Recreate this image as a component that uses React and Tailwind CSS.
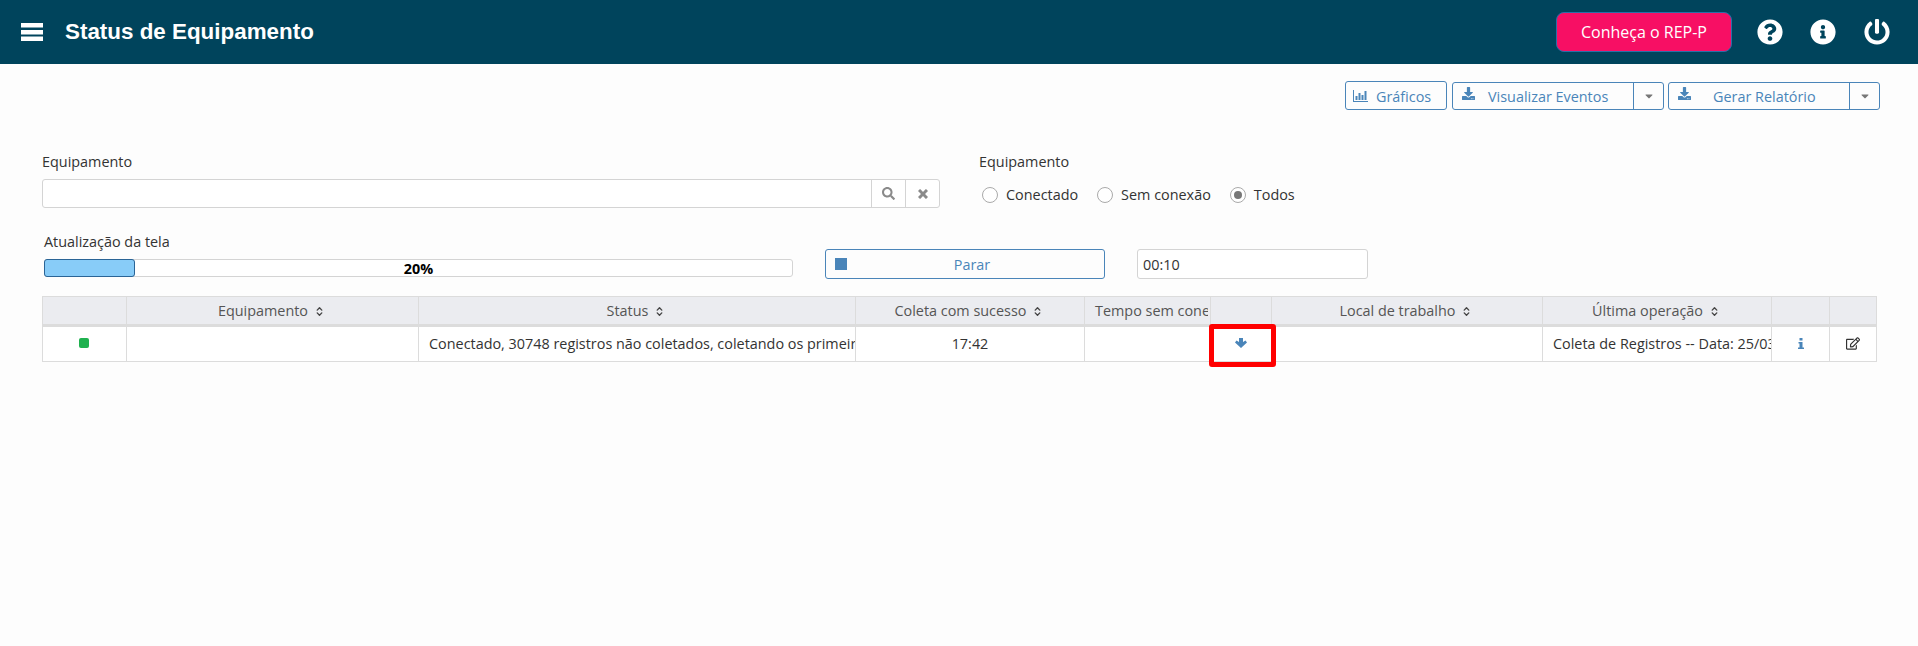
import React from "react";
import { FaQuestionCircle, FaInfoCircle, FaPowerOff, FaDownload, FaCaretDown, FaSearch, FaRegEdit } from "react-icons/fa";
import { LuChevronsUpDown } from "react-icons/lu";

function Sort() {
  return <LuChevronsUpDown className="inline-block ml-1.5 w-[11px] h-[11px] text-[#444] align-[-1px]" strokeWidth={3} />;
}

function SplitButton({ label, labelClass }) {
  return (
    <div className="flex w-[212px] mt-[1px] h-[28px] border border-[#4a85b9] rounded-[3px] text-[#4a85b9]">
      <div className="flex-1 flex items-center pl-[9px]">
        <FaDownload className="w-[13px] h-[13px] -mt-[5px]" />
        <span className={`text-[14.4px] pt-[2px] ${labelClass}`}>{label}</span>
      </div>
      <div className="w-[30px] border-l border-[#4a85b9] flex items-center justify-center">
        <FaCaretDown className="w-[12px] h-[12px] text-[#777]" />
      </div>
    </div>
  );
}

function Radio({ label, checked, className }) {
  return (
    <label className={`flex items-center ${className}`}>
      <span className="w-4 h-4 rounded-full border border-[#aaa] bg-white flex items-center justify-center">
        {checked && <span className="w-2 h-2 rounded-full bg-[#777]" />}
      </span>
      <span className="ml-2 text-[14.4px] text-[#333]">{label}</span>
    </label>
  );
}

const headers = [
  { w: "w-[84px]" },
  { w: "w-[292px]", t: "Equipamento" },
  { w: "w-[437px]", t: "Status" },
  { w: "w-[229px]", t: "Coleta com sucesso" },
  { w: "w-[126px]", t: "Tempo sem conexão", noSort: true },
  { w: "w-[61px]" },
  { w: "w-[271px]", t: "Local de trabalho" },
  { w: "w-[229px]", t: "Última operação" },
  { w: "w-[58px]" },
  { w: "w-[47px]" },
];

const td = "border border-[#dcdcdc] p-0 h-[36px] text-[14.4px] text-[#333] align-middle";

export default function App() {
  return (
    <div className="w-[1918px] h-[646px] bg-[#fdfdfd] overflow-hidden font-['Open_Sans',sans-serif] text-[#333]">
      <header className="h-16 bg-[#00445c] flex items-center text-white">
        <svg className="ml-[21px] w-[22px] h-[18px] fill-white" viewBox="0 0 22 18">
          <rect x="0" y="0" width="22" height="4.5" />
          <rect x="0" y="7" width="22" height="4.5" />
          <rect x="0" y="13.5" width="22" height="4.5" />
        </svg>
        <h1 className="ml-[22px] -mt-[1px] text-[22.4px] font-bold font-['Liberation_Sans',sans-serif]">Status de Equipamento</h1>
        <button className="ml-auto w-[176px] h-10 rounded-[8px] bg-[#f70f64] border border-[#2a6fa8] text-[16px] text-white">Conheça o REP-P</button>
        <FaQuestionCircle className="ml-[25px] w-[26px] h-[26px]" />
        <FaInfoCircle className="ml-[27px] w-[26px] h-[26px]" />
        <FaPowerOff className="ml-[28px] mr-[28px] w-[26px] h-[26px]" />
      </header>

      <div className="flex justify-end items-start gap-[4px] pr-[38px] mt-[17px] text-[#4a85b9]">
        <div className="w-[102px] mr-[1px] h-[29px] border border-[#4a85b9] rounded-[3px] flex items-center pl-[7px]">
          <svg className="w-[15px] h-[12px] fill-[#4a85b9]" viewBox="0 0 15 12">
            <rect x="0" y="0" width="1" height="12" />
            <rect x="0" y="11" width="15" height="1" />
            <rect x="2.5" y="6" width="2" height="4" />
            <rect x="5.5" y="3" width="2" height="7" />
            <rect x="8.5" y="5" width="2" height="5" />
            <rect x="11.5" y="1" width="2" height="9" />
          </svg>
          <span className="ml-[8px] pt-[2px] text-[14.4px]">Gráficos</span>
        </div>
        <SplitButton label="Visualizar Eventos" labelClass="ml-[13px]" />
        <SplitButton label="Gerar Relatório" labelClass="ml-[22px]" />
      </div>

      <div className="flex mt-[42px] pl-[42px]">
        <div className="w-[898px]">
          <label className="block text-[14.4px] leading-[20px]">Equipamento</label>
          <div className="flex h-[29px] mt-[7px] border border-[#d4d4d4] rounded-[3px] bg-white">
            <div className="flex-1" />
            <div className="w-[34px] border-l border-[#d4d4d4] flex items-center justify-center text-[#8a8a8a]">
              <FaSearch className="w-[13px] h-[13px]" />
            </div>
            <div className="w-[34px] border-l border-[#d4d4d4] flex items-center justify-center">
              <svg className="w-[10px] h-[10px] stroke-[#8a8a8a]" viewBox="0 0 10 10" strokeWidth="3">
                <line x1="1" y1="1" x2="9" y2="9" />
                <line x1="9" y1="1" x2="1" y2="9" />
              </svg>
            </div>
          </div>
        </div>
        <div className="ml-[39px]">
          <label className="block text-[14.4px] leading-[20px]">Equipamento</label>
          <div className="flex mt-[13px] h-[20px]">
            <Radio label="Conectado" className="ml-[3px]" />
            <Radio label="Sem conexão" className="ml-[19px]" />
            <Radio label="Todos" checked className="ml-[19px]" />
          </div>
        </div>
      </div>

      <div className="flex items-end mt-[24px] pl-[44px]">
        <div className="w-[749px]">
          <div className="text-[14.4px] leading-[20px]">Atualização da tela</div>
          <div className="relative mt-[7px] h-[18px] border border-[#d4d4d4] rounded-[3px] bg-white">
            <div className="absolute -left-px -top-px -bottom-px w-[91px] bg-[#88ccf8] border border-[#2a6496] rounded-[3px]" />
            <div className="relative text-center text-[14.4px] leading-[18px] font-bold text-black">20%</div>
          </div>
        </div>
        <div className="ml-[32px] w-[280px] h-[30px] -mb-[2px] border border-[#4a85b9] rounded-[3px] flex items-center pl-[9px] text-[#4a85b9]">
          <span className="w-3 h-3 bg-[#4a85b9]" />
          <span className="flex-1 text-center text-[14.4px] pr-[7px] pt-[2px]">Parar</span>
        </div>
        <div className="ml-[32px] w-[231px] h-[30px] -mb-[2px] border border-[#d4d4d4] rounded-[3px] bg-white flex items-center pl-[5px] pt-[2px] text-[14.4px]">00:10</div>
      </div>

      <table className="table-fixed border-collapse ml-[42px] mt-[19px] w-[1834px]">
        <thead>
          <tr>
            {headers.map((h, i) => (
              <th key={i} className={`${h.w} h-[29px] bg-[#ebecf0] border border-[#dcdcdc] border-b-[3px] p-0 pr-[2px] font-normal text-[14.4px] text-[#555] overflow-hidden whitespace-nowrap`}>
                {h.t && (h.noSort ? <div className="overflow-hidden pl-[10px] text-left">{h.t}</div> : <>{h.t}<Sort /></>)}
              </th>
            ))}
          </tr>
        </thead>
        <tbody>
          <tr className="bg-white">
            <td className={td}><div className="w-[10px] h-[10px] rounded-[2px] bg-[#1fb14f] mx-auto -mt-[2px] -translate-x-[1px]" /></td>
            <td className={td}></td>
            <td className={td}><div className="overflow-hidden whitespace-nowrap pl-[10px]">Conectado, 30748 registros não coletados, coletando os primeiros</div></td>
            <td className={`${td} text-center`}>17:42</td>
            <td className={td}></td>
            <td className={`${td} relative`}>
              <svg className="mx-auto -mt-[2px] w-[12px] h-[10px] fill-[#4a85b9]" viewBox="0 0 12 10">
                <polygon points="4,0 8,0 8,4 10.5,2.5 12,4.5 6,10 0,4.5 1.5,2.5 4,4" />
              </svg>
              <div className="absolute -left-[2px] -top-[3px] w-[67px] h-[43px] rounded-[3px] border-[5px] border-[#ff0000]" />
            </td>
            <td className={td}></td>
            <td className={td}><div className="overflow-hidden whitespace-nowrap pl-[10px]">Coleta de Registros -- Data: 25/03/2024</div></td>
            <td className={td}>
              <svg className="mx-auto -mt-[2px] w-[6px] h-[11px] fill-[#4a85b9]" viewBox="0 0 6 11">
                <rect x="1.5" y="0" width="3" height="2.5" />
                <polygon points="0.5,4 4.5,4 4.5,9.5 6,9.5 6,11 0,11 0,9.5 1.5,9.5 1.5,5.5 0.5,5.5" />
              </svg>
            </td>
            <td className={td}><FaRegEdit className="mx-auto -mt-[2px] w-[14px] h-[13px] text-[#333]" /></td>
          </tr>
        </tbody>
      </table>
    </div>
  );
}
